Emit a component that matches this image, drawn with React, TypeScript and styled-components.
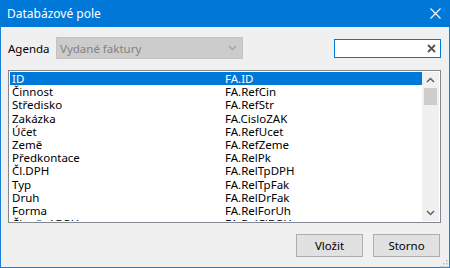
import styled, { createGlobalStyle } from 'styled-components';

const GlobalStyle = createGlobalStyle`
  html, body {
    margin: 0;
    padding: 0;
    background: #f0f0f0;
  }
  body {
    font-family: "Noto Sans", "Open Sans", sans-serif;
    font-size: 11.5px;
    color: #000;
  }
`;

const Window = styled.div`
  width: 450px;
  height: 268px;
  box-sizing: border-box;
  border: 1px solid #1a7fd6;
  border-top: none;
  background: #f0f0f0;
  display: flex;
  flex-direction: column;
  position: relative;
`;

const TitleBar = styled.div`
  height: 27px;
  flex: none;
  background: #0078d7;
  color: #fff;
  display: flex;
  align-items: center;
  justify-content: space-between;
  padding: 0 8px 0 7px;
  margin: 0 -1px;
  font-size: 12px;
`;

const CloseButton = styled.div`
  width: 12px;
  height: 12px;
  display: flex;
  svg {
    display: block;
  }
`;

const Body = styled.div`
  flex: 1;
  display: flex;
  flex-direction: column;
  padding: 10px 8px 10px 7px;
`;

const TopRow = styled.div`
  display: flex;
  align-items: center;
  height: 22px;
`;

const Label = styled.span`
  width: 48px;
  flex: none;
`;

const Combo = styled.div`
  width: 187px;
  height: 22px;
  box-sizing: border-box;
  background: #cccccc;
  border: 1px solid #c2c2c2;
  color: #838383;
  display: flex;
  align-items: center;
  justify-content: space-between;
  padding: 0 5px 0 3px;
`;

const SearchBox = styled.div`
  margin-left: auto;
  width: 107px;
  height: 19px;
  box-sizing: border-box;
  border: 1px solid #0078d7;
  background: #fff;
  display: flex;
  align-items: center;
  justify-content: flex-end;
  padding-right: 4px;
`;

const List = styled.div`
  margin-top: 11px;
  height: 153px;
  width: 433px;
  box-sizing: border-box;
  border: 1px solid #828790;
  background: #fff;
  display: flex;
  padding: 1px;
`;

const Rows = styled.div`
  flex: 1;
  overflow: hidden;
`;

const Row = styled.div<{ $selected?: boolean }>`
  display: flex;
  height: 13.2px;
  line-height: 13.2px;
  padding-left: 2px;
  background: ${(p) => (p.$selected ? '#0078d7' : 'transparent')};
  color: ${(p) => (p.$selected ? '#fff' : '#000')};
  white-space: nowrap;
`;

const Cell = styled.span`
  width: 213px;
  flex: none;
`;

const ScrollBar = styled.div`
  width: 17px;
  flex: none;
  background: #f0f0f0;
  display: flex;
  flex-direction: column;
  align-items: center;
`;

const ScrollArrow = styled.div`
  height: 16px;
  width: 17px;
  display: flex;
  align-items: center;
  justify-content: center;
`;

const Thumb = styled.div`
  width: 13px;
  height: 17px;
  background: #cdcdcd;
`;

const Track = styled.div`
  flex: 1;
`;

const Footer = styled.div`
  margin-top: auto;
  display: flex;
  justify-content: flex-end;
  gap: 10px;
  padding-right: 1px;
`;

const Button = styled.button`
  width: 67px;
  height: 23px;
  box-sizing: border-box;
  background: #e1e1e1;
  border: 1px solid #adadad;
  font-family: inherit;
  font-size: 11.5px;
  color: #000;
  padding: 0;
`;

const Grip = styled.div`
  position: absolute;
  right: 1px;
  bottom: 1px;
  width: 10px;
  height: 10px;
`;

const rows: [string, string][] = [
  ['ID', 'FA.ID'],
  ['Činnost', 'FA.RefCin'],
  ['Středisko', 'FA.RefStr'],
  ['Zakázka', 'FA.CisloZAK'],
  ['Účet', 'FA.RefUcet'],
  ['Země', 'FA.RefZeme'],
  ['Předkontace', 'FA.RelPk'],
  ['Čl.DPH', 'FA.RelTpDPH'],
  ['Typ', 'FA.RelTpFak'],
  ['Druh', 'FA.RelDrFak'],
  ['Forma', 'FA.RelForUh'],
  ['Členění DPH', 'FA.RelClDPH'],
];

function Chevron({ up, color }: { up?: boolean; color: string }) {
  return (
    <svg width="9" height="6" viewBox="0 0 9 6">
      <path
        d={up ? 'M1 5 L4.5 1.5 L8 5' : 'M1 1 L4.5 4.5 L8 1'}
        fill="none"
        stroke={color}
        strokeWidth="1.5"
      />
    </svg>
  );
}

function App() {
  return (
    <>
      <GlobalStyle />
      <Window>
        <TitleBar>
          <span>Databázové pole</span>
          <CloseButton>
            <svg width="11" height="11" viewBox="0 0 11 11">
              <path d="M0.5 0.5 L10.5 10.5 M10.5 0.5 L0.5 10.5" stroke="#fff" strokeWidth="1.1" />
            </svg>
          </CloseButton>
        </TitleBar>
        <Body>
          <TopRow>
            <Label>Agenda</Label>
            <Combo>
              <span>Vydané faktury</span>
              <Chevron color="#a6a6a6" />
            </Combo>
            <SearchBox>
              <svg width="9" height="9" viewBox="0 0 9 9">
                <path d="M1 1 L8 8 M8 1 L1 8" stroke="#555" strokeWidth="1.8" />
              </svg>
            </SearchBox>
          </TopRow>
          <List>
            <Rows>
              {rows.map(([name, field], i) => (
                <Row key={field} $selected={i === 0}>
                  <Cell>{name}</Cell>
                  <span>{field}</span>
                </Row>
              ))}
            </Rows>
            <ScrollBar>
              <ScrollArrow>
                <Chevron up color="#606060" />
              </ScrollArrow>
              <Thumb />
              <Track />
              <ScrollArrow>
                <Chevron color="#606060" />
              </ScrollArrow>
            </ScrollBar>
          </List>
          <Footer>
            <Button>Vložit</Button>
            <Button>Storno</Button>
          </Footer>
        </Body>
        <Grip>
          <svg width="10" height="10" viewBox="0 0 10 10">
            {[
              [8, 2],
              [5, 5],
              [8, 5],
              [2, 8],
              [5, 8],
              [8, 8],
            ].map(([x, y]) => (
              <rect key={`${x}-${y}`} x={x} y={y} width="1.5" height="1.5" fill="#b8b8b8" />
            ))}
          </svg>
        </Grip>
      </Window>
    </>
  );
}

export default App;
